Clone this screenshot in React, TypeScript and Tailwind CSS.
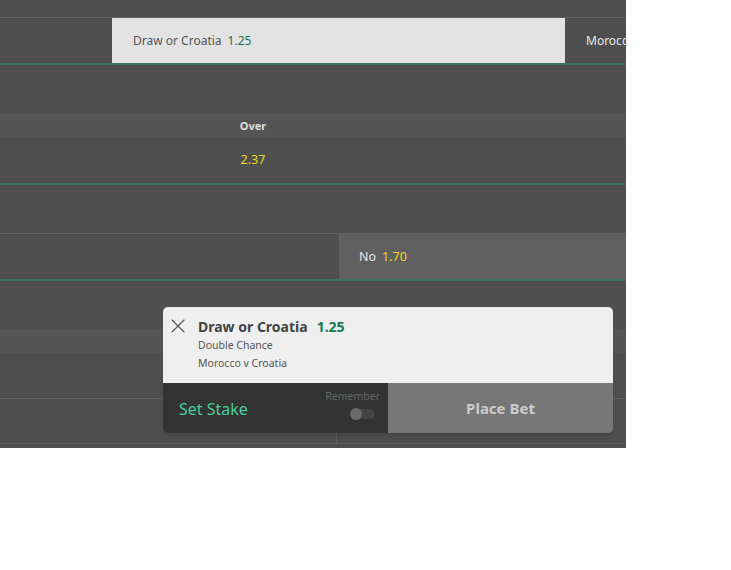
import { X } from "lucide-react";

// ── Background market grid ────────────────────────────────────────────────────

function EmptyRow({ h, line }: { h: string; line?: "green" | "gray" }) {
  const border =
    line === "green" ? "border-b-2 border-[#2f7a5b]" : line === "gray" ? "border-b border-[#5f5f5f]" : "";
  return <div className={`${h} ${border}`} />;
}

function HeaderRow({ label }: { label?: string }) {
  return (
    <div className="h-[24px] bg-[#555555] flex items-center">
      <div className="w-[506px] text-center text-[11px] font-bold text-[#dddddd] mt-[2px]">{label}</div>
    </div>
  );
}

// ── Bet slip popup ───────────────────────────────────────────────────────────

function BetSlip() {
  return (
    <div className="absolute left-[163px] top-[307px] w-[450px] rounded-[5px] overflow-hidden shadow-md">
      <div className="h-[76px] bg-[#efefef] flex pt-[11px]">
        <div className="w-[30px] flex justify-center -mt-[4px]">
          <X className="w-[24px] h-[24px] text-[#555555]" strokeWidth={1.1} />
        </div>
        <div className="flex flex-col pl-[5px]">
          <div className="flex items-baseline gap-[9px] leading-[17px]">
            <span className="text-[14px] font-bold text-[#444444]">Draw or Croatia</span>
            <span className="text-[14px] font-bold text-[#137a55]">1.25</span>
          </div>
          <span className="text-[10.5px] text-[#555555] leading-[18px] mt-[1px]">Double Chance</span>
          <span className="text-[10.5px] text-[#555555] leading-[18px]">Morocco v Croatia</span>
        </div>
      </div>
      <div className="h-[50px] flex">
        <div className="w-[225px] bg-[#333333] flex items-center justify-between pl-[16px] pr-[8px]">
          <span className="text-[16px] text-[#45cf9b] mt-[2px]">Set Stake</span>
          <div className="flex flex-col items-end gap-[6px] -mt-[8px]">
            <span className="text-[10.5px] text-[#666666] leading-[13px]">Remember</span>
            <div className="relative w-[24px] h-[10px] rounded-full bg-[#444444] mr-[5px]">
              <div className="absolute -left-[1px] -top-[1px] w-[12px] h-[12px] rounded-full bg-[#6a6a6a]" />
            </div>
          </div>
        </div>
        <div className="flex-1 bg-[#777777] flex items-center justify-center">
          <span className="text-[15px] font-bold text-[#cccccc]">Place Bet</span>
        </div>
      </div>
    </div>
  );
}

// ── Main ─────────────────────────────────────────────────────────────────────

export default function App() {
  return (
    <div className="w-[731px] h-[570px] bg-white" style={{ fontFamily: '"Noto Sans", "Open Sans", sans-serif' }}>
      <div className="relative w-[626px] h-[448px] bg-[#4f4f4f] overflow-hidden">
        <EmptyRow h="h-[18px]" line="gray" />

        {/* selection row */}
        <div className="h-[47px] flex border-b-2 border-[#2f7a5b]">
          <div className="w-[112px]" />
          <div className="w-[453px] bg-[#e3e3e3] flex items-center pl-[21px] text-[12px] pt-[1px]">
            <span className="text-[#555555]">Draw or Croatia</span>
            <span className="ml-[6px] text-[#1d6f57]">1.25</span>
          </div>
          <div className="flex-1 flex items-center pl-[21px] text-[12px] pt-[1px] text-[#e6e6e6] whitespace-nowrap overflow-hidden">
            Morocco
          </div>
        </div>

        <EmptyRow h="h-[48px]" />
        <HeaderRow label="Over" />

        <div className="h-[48px] flex items-center border-b-2 border-[#2f7a5b]">
          <div className="w-[506px] text-center text-[12.5px] text-[#f3d51c] mt-[1px]">2.37</div>
        </div>

        <EmptyRow h="h-[49px]" line="gray" />

        {/* yes / no row */}
        <div className="h-[47px] flex border-b-2 border-[#2f7a5b]">
          <div className="w-[339px]" />
          <div className="flex-1 bg-[#606060] flex items-center pl-[20px] text-[12.5px] pt-[1px]">
            <span className="text-[#e6e6e6]">No</span>
            <span className="ml-[6px] text-[#f3d51c]">1.70</span>
          </div>
        </div>

        <EmptyRow h="h-[48px]" />
        <HeaderRow />
        <EmptyRow h="h-[46px]" line="gray" />

        <div className="h-[45px] flex border-b border-[#5f5f5f]">
          <div className="w-[337px] border-r border-[#5f5f5f]" />
          <div className="flex-1" />
        </div>

        <BetSlip />
      </div>
    </div>
  );
}
